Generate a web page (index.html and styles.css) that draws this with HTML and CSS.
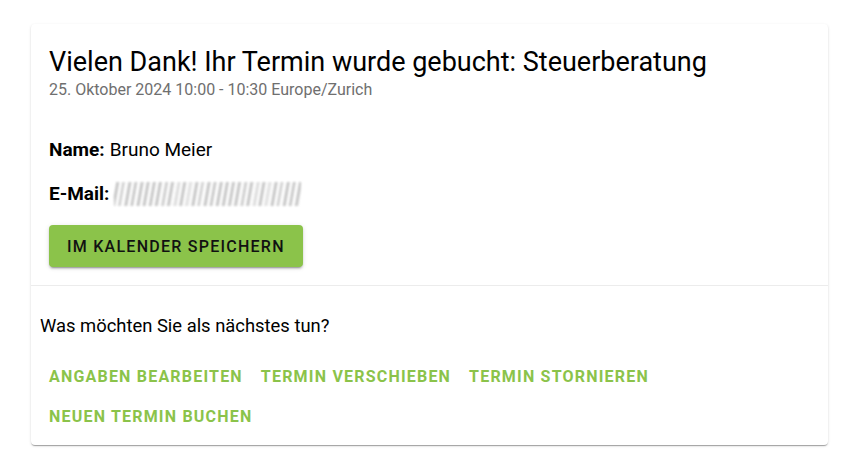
FILE: index.html
```html
<!DOCTYPE html>
<html lang="de">
<head>
<meta charset="utf-8">
<title>Termin gebucht</title>
<link rel="stylesheet" href="styles.css">
</head>
<body>
<div class="page">
  <div class="card">
    <div class="top">
      <h1 class="title">Vielen Dank! Ihr Termin wurde gebucht: Steuerberatung</h1>
      <div class="subtitle">25. Oktober 2024 10:00 - 10:30 Europe/Zurich</div>
      <div class="details">
        <p class="row"><b>Name:</b> Bruno Meier</p>
        <p class="row"><b>E-Mail:</b> <span class="blur" aria-label="verborgen"></span></p>
      </div>
      <button class="btn-primary">Im Kalender speichern</button>
    </div>
    <div class="bottom">
      <p class="question">Was möchten Sie als nächstes tun?</p>
      <div class="actions">
        <button class="btn-text">Angaben bearbeiten</button>
        <button class="btn-text">Termin verschieben</button>
        <button class="btn-text">Termin stornieren</button>
        <button class="btn-text">Neuen Termin buchen</button>
      </div>
    </div>
  </div>
</div>
</body>
</html>
```

FILE: styles.css
```css
html, body {
  margin: 0;
  padding: 0;
  background: #ffffff;
  font-family: Roboto, "Noto Sans", Arial, sans-serif;
  color: rgba(0, 0, 0, 0.87);
}
.page {
  padding: 24px 25px 12px 31px;
}
.card {
  width: 797px;
  background: #fff;
  border-radius: 4px;
  box-shadow: 0 2px 1px -1px rgba(0,0,0,.2), 0 1px 1px 0 rgba(0,0,0,.14), 0 1px 3px 0 rgba(0,0,0,.12);
}
.top {
  padding: 20px 18px 18px 18px;
  border-bottom: 1px solid #ececec;
}
.title {
  margin: 0;
  font-size: 27px;
  font-weight: 400;
  line-height: 36px;
  color: #000;
}
.subtitle {
  font-size: 16px;
  line-height: 20px;
  color: #6f6f6f;
}
.details {
  margin-top: 37px;
}
.row {
  margin: 0 0 18px 0;
  font-size: 19px;
  line-height: 26px;
  color: #000;
  display: flex;
  align-items: center;
  gap: 5px;
}
.row b {
  font-weight: 700;
}
.blur {
  display: inline-block;
  width: 187px;
  height: 24px;
  background:
    repeating-linear-gradient(100deg, rgba(255,255,255,0) 0px, rgba(255,255,255,0) 9px, rgba(255,255,255,.7) 11px, rgba(255,255,255,0) 13px),
    repeating-linear-gradient(100deg, #fff 0px, #fff 2px, #a8a8a8 3px, #d4d4d4 5px, #fff 6px);
  filter: blur(0.8px);
  opacity: 0.85;
}
.btn-primary {
  display: block;
  margin-top: 3px;
  height: 42px;
  padding: 0 18px;
  border: none;
  border-radius: 4px;
  background: #8bc34a;
  color: #111;
  font-family: inherit;
  font-size: 16px;
  font-weight: 500;
  letter-spacing: 1.25px;
  text-transform: uppercase;
  box-shadow: 0 3px 1px -2px rgba(0,0,0,.2), 0 2px 2px 0 rgba(0,0,0,.14), 0 1px 5px 0 rgba(0,0,0,.12);
}
.bottom {
  padding: 28px 9px 11px 9px;
}
.question {
  margin: 0;
  font-size: 18.4px;
  line-height: 24px;
  color: #000;
}
.actions {
  margin-top: 20px;
  display: flex;
  flex-wrap: wrap;
  row-gap: 4px;
  width: 660px;
}
.btn-text {
  height: 36px;
  padding: 0 9px;
  border: none;
  background: transparent;
  color: #8bc34a;
  font-family: inherit;
  font-size: 16px;
  font-weight: 700;
  letter-spacing: 1.2px;
  text-transform: uppercase;
}
```
